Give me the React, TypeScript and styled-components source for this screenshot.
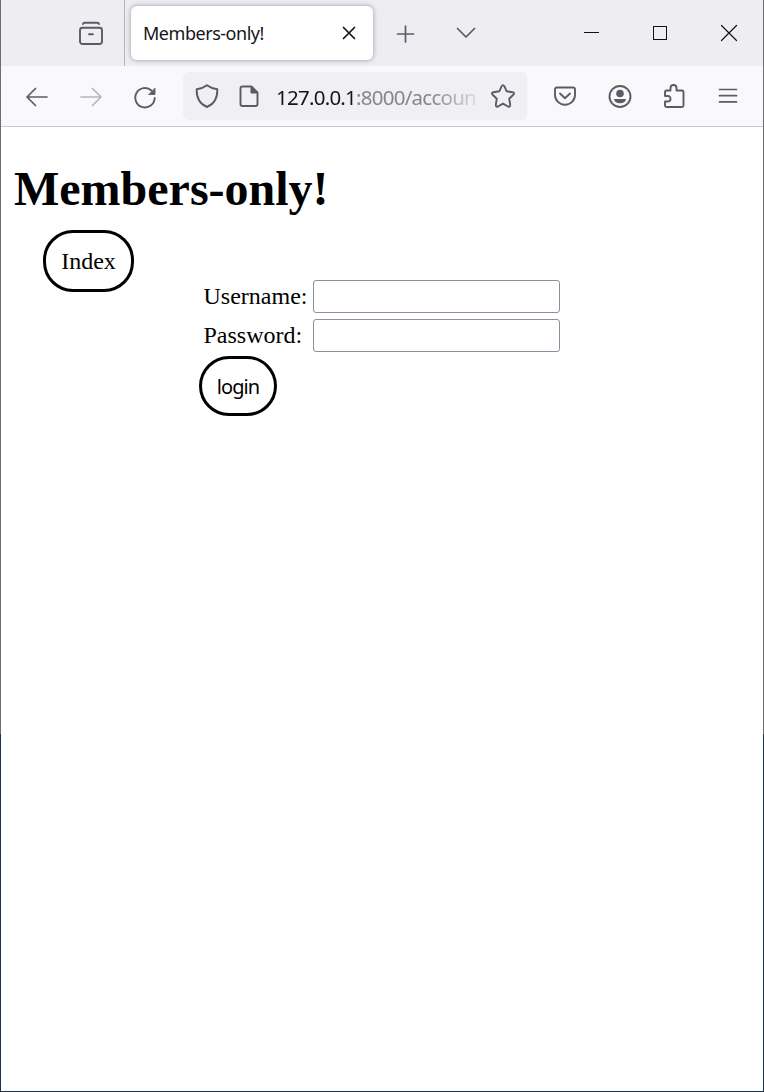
import React from "react";
import styled, { createGlobalStyle } from "styled-components";

const GlobalStyle = createGlobalStyle`
  *, *::before, *::after { box-sizing: border-box; }
  body { margin: 0; background: #fff; }
`;

const uiFont = `"Noto Sans", "Open Sans", sans-serif`;
const pageFont = `"Liberation Serif", "Times New Roman", serif`;

const WindowFrame = styled.div`
  width: 764px;
  height: 1092px;
  padding: 0 1px 1px;
  overflow: hidden;
  background: linear-gradient(#6e6e70 0 734px, #1c3350 734px);
`;

const WindowBody = styled.div`
  display: flex;
  flex-direction: column;
  height: 100%;
  background: #fff;
`;

const TabBar = styled.div`
  display: flex;
  align-items: center;
  flex: none;
  height: 66px;
  background: #eeedf2;
  color: #5b5b66;
`;

const IconButton = styled.button<{ $width?: number; $left?: number; $faded?: boolean }>`
  display: flex;
  align-items: center;
  justify-content: center;
  flex: none;
  width: ${(p) => p.$width ?? 54}px;
  height: 48px;
  margin: 0 0 0 ${(p) => p.$left ?? 0}px;
  padding: 0;
  border: 0;
  background: transparent;
  color: inherit;
  opacity: ${(p) => (p.$faded ? 0.42 : 1)};
`;

const Separator = styled.div`
  width: 1px;
  height: 66px;
  margin-left: 6px;
  background: #b4b3ba;
`;

const Tab = styled.div`
  display: flex;
  align-items: center;
  justify-content: space-between;
  width: 242px;
  height: 54px;
  margin-left: 6px;
  padding: 0 12px 0 12px;
  border-radius: 6px;
  background: #fff;
  box-shadow: 0 0 5px rgba(80, 80, 90, 0.55);
  color: #15141a;
`;

const TabTitle = styled.span`
  font: 18px/26px ${uiFont};
  letter-spacing: -0.47px;
  white-space: nowrap;
`;

const WindowControls = styled.div`
  display: flex;
  margin-left: auto;
  color: #111;
`;

const Toolbar = styled.div`
  display: flex;
  align-items: center;
  flex: none;
  height: 61px;
  padding: 0 9px;
  border-bottom: 1px solid #cbcace;
  background: #f9f9fc;
  color: #5b5b66;
`;

const AddressBar = styled.div`
  display: flex;
  align-items: center;
  width: 344px;
  height: 48px;
  margin: 0 11px;
  padding: 0 12px;
  border-radius: 6px;
  background: #f0eff4;
`;

const Address = styled.div`
  width: 204px;
  margin: 2px 12px 0 15px;
  overflow: hidden;
  color: #86868d;
  font: 20.5px/30px ${uiFont};
  letter-spacing: -0.75px;
  white-space: nowrap;
  mask-image: linear-gradient(to right, #000 155px, transparent 212px);
`;

const Host = styled.span`
  color: #15141a;
`;

const Page = styled.main`
  flex: 1;
  padding: 34px 12px 0;
  color: #000;
  font: 24px/28px ${pageFont};
`;

const Title = styled.h1`
  margin: 0;
  padding-left: 1px;
  font-size: 48px;
  line-height: 56px;
`;

const Nav = styled.nav`
  display: flex;
  margin: 13px 0 0 30px;
`;

const IndexLink = styled.a`
  display: flex;
  align-items: center;
  justify-content: center;
  width: 91px;
  height: 62px;
  border: 3px solid #000;
  border-radius: 30px;
  color: inherit;
  text-decoration: none;
`;

const LoginForm = styled.form`
  display: flex;
  flex-direction: column;
  align-items: flex-start;
  margin: -12px 0 0 186px;
`;

const Field = styled.label`
  display: grid;
  grid-template-columns: 109.5px 247px;
  align-items: center;
  height: 33px;
  margin: 0 0 6px 4.5px;
`;

const FieldName = styled.span`
  padding-bottom: 2px;
`;

const TextInput = styled.input`
  width: 247px;
  height: 33px;
  padding: 1px 4px;
  border: 1px solid #8f8f9d;
  border-radius: 3px;
  background: #fff;
  font: 20px ${uiFont};
  outline: none;
`;

const LoginButton = styled.button`
  width: 78px;
  height: 60px;
  margin-top: -2px;
  padding: 1px 0 0;
  border: 3px solid #000;
  border-radius: 30px;
  background: #fff;
  color: #000;
  font: 20px/27px ${uiFont};
  letter-spacing: -0.95px;
`;

const Glyph = styled.svg`
  display: block;
  flex: none;
  overflow: visible;
  fill: none;
  stroke: currentColor;
  stroke-width: 1.9;
  stroke-linecap: round;
  stroke-linejoin: round;
`;

type IconProps = { children: React.ReactNode; size?: number };
const Icon = ({ children, size = 24 }: IconProps) => (
  <Glyph width={size} height={size} viewBox={`0 0 ${size} ${size}`} aria-hidden="true">
    {children}
  </Glyph>
);

export default function App() {
  return (
    <>
      <GlobalStyle />
      <WindowFrame>
        <WindowBody>
          <TabBar>
            <IconButton $left={63} aria-label="Recent browsing">
              <Icon>
                <path d="M4 3Q4.300 1.800 5.500 1.800H18.500Q19.700 1.800 20 3" />
                <rect x="1" y="6.800" width="22" height="16.200" rx="2.500" />
                <path d="M10 13.200h4" />
              </Icon>
            </IconButton>
            <Separator />
            <Tab>
              <TabTitle>Members-only!</TabTitle>
              <Icon>
                <path d="M6.5 6.5 17.5 17.5M17.5 6.5 6.5 17.5" strokeWidth="1.7" />
              </Icon>
            </Tab>
            <IconButton $left={5} aria-label="New tab">
              <Icon><path d="M12.500 5v16M4.500 13h16" strokeWidth="1.7" /></Icon>
            </IconButton>
            <IconButton $left={7} aria-label="List all tabs">
              <Icon><path d="m3.500 7.500 8.500 8.500 8.500-8.500" strokeWidth="1.7" /></Icon>
            </IconButton>
            <WindowControls>
              <IconButton $width={69} aria-label="Minimize">
                <Icon><path d="M4.500 11.500h14" strokeWidth="1" strokeLinecap="square" /></Icon>
              </IconButton>
              <IconButton $width={68} aria-label="Maximize">
                <Icon><rect x="5.5" y="5.5" width="13" height="13" strokeWidth="1" strokeLinejoin="miter" /></Icon>
              </IconButton>
              <IconButton $width={69} aria-label="Close">
                <Icon><path d="m4.5 4.5 15 15m0-15-15 15" strokeWidth="1.2" /></Icon>
              </IconButton>
            </WindowControls>
          </TabBar>
          <Toolbar>
            <IconButton aria-label="Back">
              <Icon><path d="M22 13H2m8.500-8.500L2 13l8.500 8.500" strokeWidth="1.7" /></Icon>
            </IconButton>
            <IconButton $faded aria-label="Forward">
              <Icon><path d="M2 13h20m-8.500-8.500L22 13l-8.500 8.500" strokeWidth="1.7" /></Icon>
            </IconButton>
            <IconButton aria-label="Reload">
              <Icon>
                <path d="M18.500 6.500A9.700 9.700 0 1 0 21.700 14" />
                <path d="M22 4.500v6H16Z" fill="currentColor" strokeWidth=".8" />
              </Icon>
            </IconButton>
            <AddressBar>
              <Icon>
                <path d="M12 1.300Q16.500 4.700 22.300 5.200Q22.700 18.500 12 23Q1.300 18.500 1.700 5.200Q7.500 4.700 12 1.300Z" />
              </Icon>
              <IconButton as="span" $width={24} $left={18}>
                <Icon>
                  <path d="M14.500 2.500H5.500Q3.500 2.500 3.500 4.500V20Q3.500 22 5.500 22H18.500Q20.500 22 20.500 20V8.500Z" />
                  <path d="M14 2.500V9h6.500Z" fill="currentColor" strokeWidth="1" />
                </Icon>
              </IconButton>
              <Address><Host>127.0.0.1</Host>:8000/accoun</Address>
              <Icon>
                <path d="M10.700 2.200Q12 .100 13.300 2.200L15.700 7.300 21.500 8.200Q24 8.800 22.300 10.700L18.200 14.700 19.200 20.800Q19.200 23.400 17 22.500L12 19.600 7 22.500Q4.800 23.400 4.800 20.800L5.800 14.700 1.700 10.700Q0 8.800 2.500 8.200L8.300 7.300Z" />
              </Icon>
            </AddressBar>
            <IconButton aria-label="Save to Pocket">
              <Icon>
                <path d="M4 3.500H20Q22 3.500 22 5.500V11A10 9.700 0 0 1 2 11V5.500Q2 3.500 4 3.500Z" />
                <path d="m7 9.500 5 4.800 5-4.800" />
              </Icon>
            </IconButton>
            <IconButton $left={0.5} aria-label="Account">
              <Icon>
                <circle cx="12" cy="12.500" r="10.500" />
                <circle cx="12" cy="9.500" r="3.800" fill="currentColor" stroke="none" />
                <path d="M6 15H18Q17.200 19.300 12 19.300T6 15Z" fill="currentColor" stroke="none" />
              </Icon>
            </IconButton>
            <IconButton aria-label="Extensions">
              <Icon>
                <path d="M4.500 6.500H8.500V4Q8.500 1 11.500 1T14.500 4V6.500H20Q21.500 6.500 21.500 8V21.500Q21.500 23 20 23H4.500Q3 23 3 21.500V17.500H5.500Q8.500 17.500 8.500 14.700T5.500 12H3V8Q3 6.500 4.500 6.500Z" />
              </Icon>
            </IconButton>
            <IconButton aria-label="Menu">
              <Icon><path d="M3.500 5.500h17M3.500 11.700h17M3.500 17.900h17" strokeWidth="1.700" /></Icon>
            </IconButton>
          </Toolbar>
          <Page>
            <Title>Members-only!</Title>
            <Nav><IndexLink>Index</IndexLink></Nav>
            <LoginForm onSubmit={(event) => event.preventDefault()}>
              <Field><FieldName>Username:</FieldName><TextInput type="text" /></Field>
              <Field><FieldName>Password:</FieldName><TextInput type="password" /></Field>
              <LoginButton type="submit">login</LoginButton>
            </LoginForm>
          </Page>
        </WindowBody>
      </WindowFrame>
    </>
  );
}
